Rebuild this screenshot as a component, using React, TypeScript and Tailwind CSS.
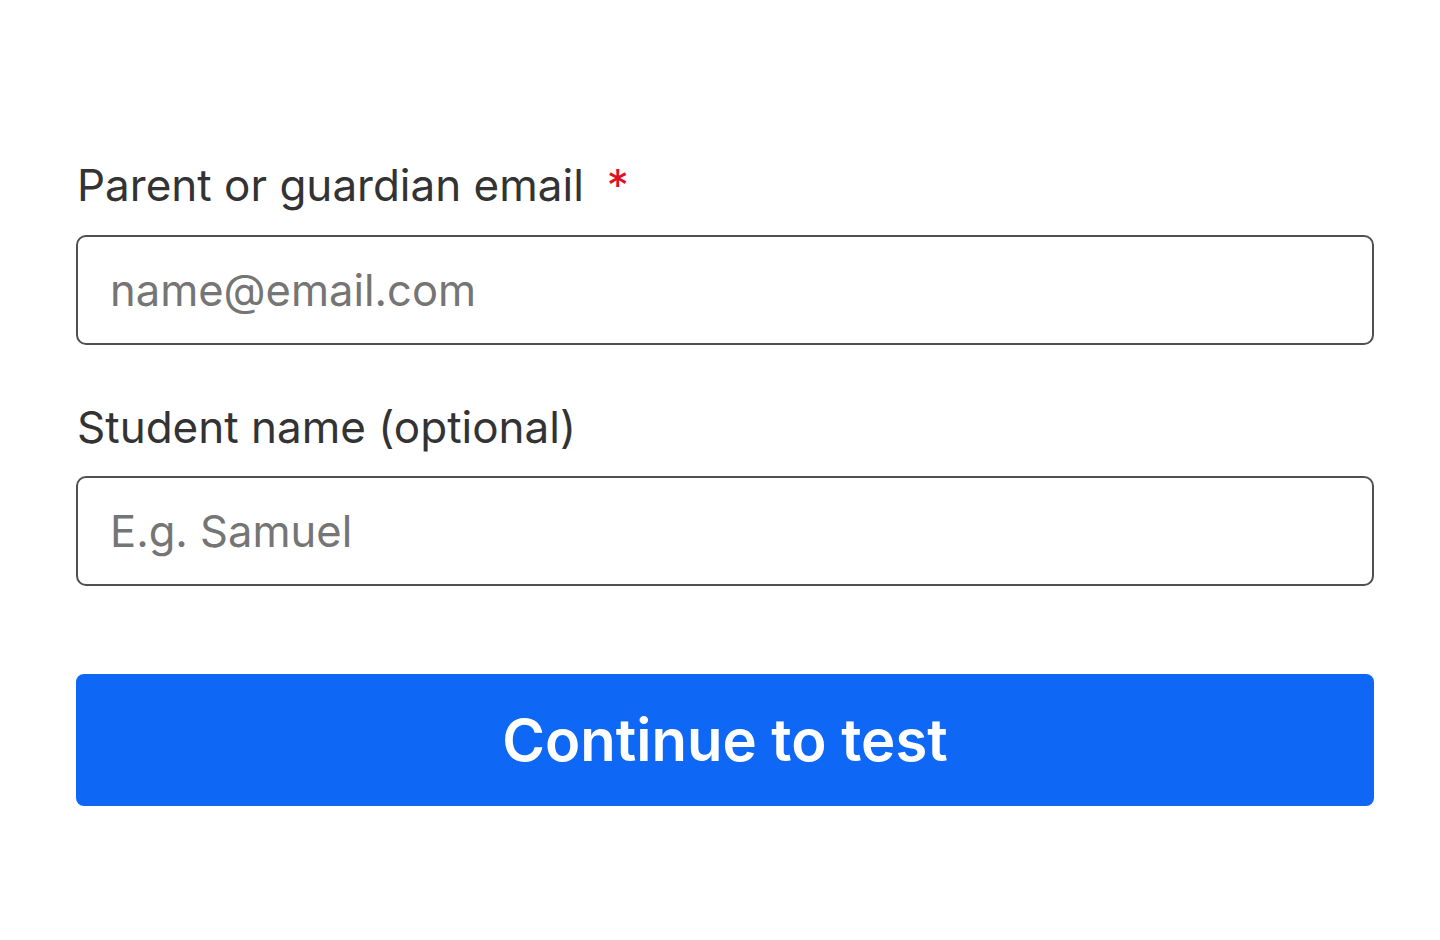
export default function App() {
  return (
    <div
      className="min-h-[940px] w-full bg-white"
      style={{ fontFamily: "Inter, 'Noto Sans', sans-serif" }}
    >
      <form className="ml-[76px] flex w-[1298px] flex-col pt-[159px]">
        <label className="flex items-start pl-px text-[44px] leading-[53px] text-[#333333]">
          Parent or guardian email
          <span className="ml-[23px] text-[#e0101e]">*</span>
        </label>
        <input
          type="email"
          placeholder="name@email.com"
          className="mt-[23px] h-[110px] w-full rounded-[10px] border-2 border-[#505050] px-[32px] text-[43.5px] text-[#333333] outline-none placeholder:text-[#757575]"
        />

        <label className="mt-[56px] pl-px text-[44px] leading-[53px] text-[#333333]">
          Student name (optional)
        </label>
        <input
          type="text"
          placeholder="E.g. Samuel"
          className="mt-[22px] h-[110px] w-full rounded-[10px] border-2 border-[#505050] px-[32px] text-[43.5px] text-[#333333] outline-none placeholder:text-[#757575]"
        />

        <button
          type="button"
          className="mt-[88px] h-[132px] w-full rounded-[8px] bg-[#0f67f5] text-[58px] font-semibold text-white"
        >
          Continue to test
        </button>
      </form>
    </div>
  );
}
